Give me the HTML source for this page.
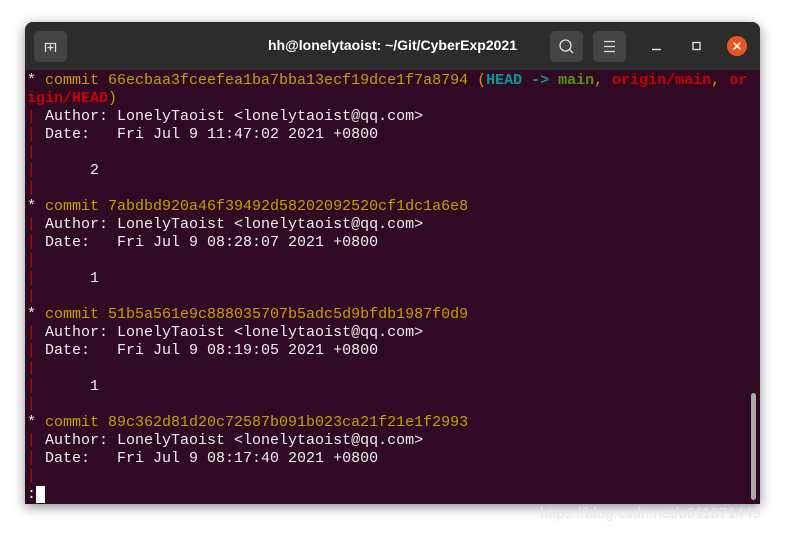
<!DOCTYPE html>
<html><head><style>
body{margin:0;width:786px;height:533px;background:#fff;position:relative;overflow:hidden;font-family:"Liberation Sans",sans-serif}
.win{position:absolute;left:25px;top:22px;width:735px;height:482px;border-radius:8px 8px 0 0;overflow:hidden;box-shadow:0 3px 12px rgba(0,0,0,.45);background:#300a24}
.tb{position:absolute;left:0;top:0;width:735px;height:48px;background:#2c2c2c}
.btn{position:absolute;top:9px;width:33px;height:31px;background:#444;border-radius:5px}
.title{position:absolute;left:0;width:735px;top:15px;text-align:center;color:#fff;font-weight:bold;font-size:14px}
.term{position:absolute;left:2px;top:50px;font-family:"Liberation Mono",monospace;font-size:15px;line-height:18px;color:#eeeeec;white-space:pre}
.y{color:#c4a000}.r{color:#cc0000}.rb{color:#cc0000;font-weight:bold}.c{color:#06989a;font-weight:bold}.g{color:#4e9a06;font-weight:bold}
.sb{position:absolute;left:726px;top:371px;width:5px;height:107px;background:#aaa;border-radius:3px}
.wm{position:absolute;left:540px;top:505px;color:#e8e8e8;font-size:15px}
</style></head><body>
<div class="win">
<div class="tb">
<div class="btn" style="left:9px"><svg width="33" height="31"><path d="M11.5 21V12.5h10V21M13.5 16.5h6M16.5 13.5v6" stroke="#ddd" stroke-width="1.3" fill="none"/></svg></div>
<div class="title">hh@lonelytaoist: ~/Git/CyberExp2021</div>
<div class="btn" style="left:525px"><svg width="33" height="31"><circle cx="15.5" cy="14.5" r="5.5" stroke="#ddd" stroke-width="1.3" fill="none"/><path d="M19.5 18.5l3.5 3.5" stroke="#ddd" stroke-width="1.4"/></svg></div>
<div class="btn" style="left:568px"><svg width="33" height="31"><path d="M11 10.5h11M11 15.5h11M11 20.5h11" stroke="#ddd" stroke-width="1.3"/></svg></div>
<svg style="position:absolute;left:620px;top:12px" width="110" height="26"><path d="M7 15.5h9" stroke="#ddd" stroke-width="1.4"/><rect x="48" y="8.5" width="7" height="7" stroke="#ddd" stroke-width="1.4" fill="none"/><circle cx="92" cy="12" r="10" fill="#e95420"/><path d="M88.5 8.5l7 7M95.5 8.5l-7 7" stroke="#fff" stroke-width="1.5"/></svg>
</div>
<div class="term">* <span class="y">commit 66ecbaa3fceefea1ba7bba13ecf19dce1f7a8794 (</span><span class="c">HEAD -&gt; </span><span class="g">main</span><span class="y">, </span><span class="rb">origin/main</span><span class="y">, </span><span class="rb">or</span>
<span class="rb">igin/HEAD</span><span class="y">)</span>
<span class="r">|</span> Author: LonelyTaoist &lt;lonelytaoist@qq.com&gt;
<span class="r">|</span> Date:   Fri Jul 9 11:47:02 2021 +0800
<span class="r">|</span>
<span class="r">|</span>      2
<span class="r">|</span>
* <span class="y">commit 7abdbd920a46f39492d58202092520cf1dc1a6e8</span>
<span class="r">|</span> Author: LonelyTaoist &lt;lonelytaoist@qq.com&gt;
<span class="r">|</span> Date:   Fri Jul 9 08:28:07 2021 +0800
<span class="r">|</span>
<span class="r">|</span>      1
<span class="r">|</span>
* <span class="y">commit 51b5a561e9c888035707b5adc5d9bfdb1987f0d9</span>
<span class="r">|</span> Author: LonelyTaoist &lt;lonelytaoist@qq.com&gt;
<span class="r">|</span> Date:   Fri Jul 9 08:19:05 2021 +0800
<span class="r">|</span>
<span class="r">|</span>      1
<span class="r">|</span>
* <span class="y">commit 89c362d81d20c72587b091b023ca21f21e1f2993</span>
<span class="r">|</span> Author: LonelyTaoist &lt;lonelytaoist@qq.com&gt;
<span class="r">|</span> Date:   Fri Jul 9 08:17:40 2021 +0800
<span class="r">|</span>
:<span style="background:#fff"> </span></div>
<div class="sb"></div>
</div>
<div class="wm">https://blog.csdn.net/u011871449</div>
</body></html>
